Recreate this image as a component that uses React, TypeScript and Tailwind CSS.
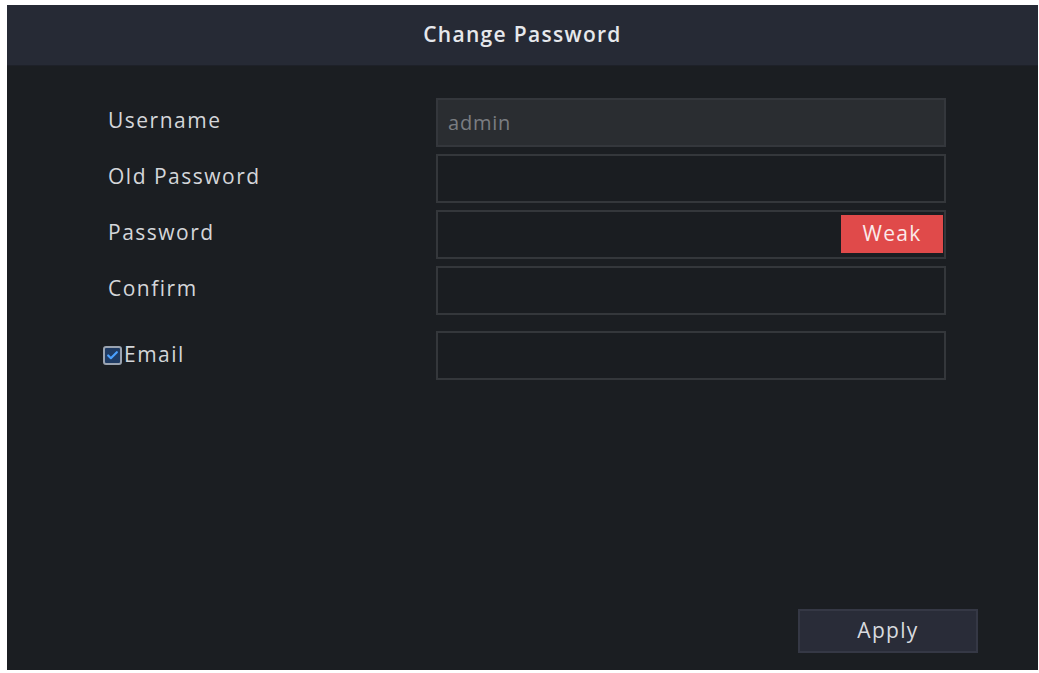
import { Check } from "lucide-react";

const rows = [
  { label: "Username", value: "admin", disabled: true },
  { label: "Old Password" },
  { label: "Password", weak: true },
  { label: "Confirm" },
];

export default function App() {
  return (
    <div className="w-[1039px] h-[673px] bg-white pt-[5px] pl-[7px] pr-[1px] pb-[3px]" style={{ fontFamily: "'Open Sans', 'Noto Sans', sans-serif" }}>
      <div className="h-full bg-[#1b1e22] flex flex-col">
        {/* Header */}
        <div className="h-[61px] bg-[#262a35] flex items-center justify-center border-b border-[#1e2129]">
          <h1 className="text-[21px] font-semibold text-[#e6e8ec] tracking-[1.3px]">Change Password</h1>
        </div>

        {/* Form */}
        <div className="flex-1 flex flex-col pt-[32px] pl-[101px]">
          {rows.map((r) => (
            <div key={r.label} className="flex items-center h-[49px] mb-[7px]">
              <span className="w-[328px] text-[21px] font-medium text-[#d4d6da] tracking-[1.5px] -mt-[3px]">{r.label}</span>
              <div className={`relative w-[510px] h-full border-2 ${r.disabled ? "bg-[#2a2d31] border-[#34373c]" : "bg-[#1a1d21] border-[#34373b]"} flex items-center px-[10px]`}>
                {r.value && <span className="text-[20px] text-[#7a7d82] tracking-[0.8px]">{r.value}</span>}
                {r.weak && (
                  <span className="absolute right-[1px] top-[3px] w-[102px] h-[38px] bg-[#e04a4a] text-[#fbe9e9] text-[21px] font-medium flex items-center justify-center tracking-[1.3px]">
                    Weak
                  </span>
                )}
              </div>
            </div>
          ))}

          <div className="flex items-center h-[49px] mt-[9px]">
            <div className="w-[328px] flex items-center -mt-[1px]">
              <span className="-ml-[5px] w-[19px] h-[19px] rounded-[3px] border-2 border-[#9aa3b0] bg-[#1f3b63] flex items-center justify-center">
                <Check className="w-[13px] h-[13px] text-[#4aa0ff]" strokeWidth={4} />
              </span>
              <span className="ml-[2px] text-[21px] font-medium text-[#d4d6da] tracking-[1.5px]">Email</span>
            </div>
            <div className="w-[510px] h-full border-2 bg-[#1a1d21] border-[#34373b]" />
          </div>

          <div className="flex-1" />

          <div className="flex justify-end pr-[60px] pb-[17px]">
            <button className="w-[180px] h-[44px] bg-[#292c38] border-2 border-[#353845] text-[21px] font-medium text-[#d8dadf] tracking-[1.3px]">
              Apply
            </button>
          </div>
        </div>
      </div>
    </div>
  );
}
